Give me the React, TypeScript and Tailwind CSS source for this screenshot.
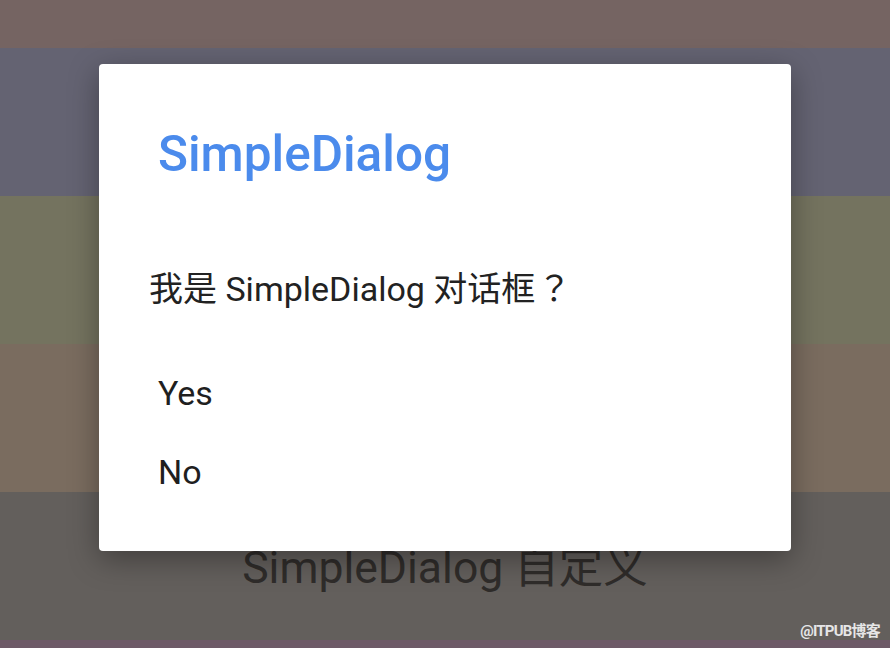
import React from "react";

const bands = [
  { bg: "bg-[#756462]", text: "AlertDialog 对话框" },
  { bg: "bg-[#646372]", text: "" },
  { bg: "bg-[#74735f]", text: "" },
  { bg: "bg-[#7a6c5f]", text: "" },
  { bg: "bg-[#635f5c]", text: "SimpleDialog 自定义" },
  { bg: "bg-[#6d5a67]", text: "" },
];

export default function App() {
  return (
    <div
      className="relative w-[890px] h-[648px] overflow-hidden"
      style={{ fontFamily: 'Roboto, "Noto Sans CJK SC", sans-serif' }}
    >
      <div className="flex flex-col -mt-[100px]">
        {bands.map((b, i) => (
          <div
            key={i}
            className={`${b.bg} h-[148px] flex items-center justify-center shrink-0`}
          >
            <span className="text-[44.5px] text-[#2f2c2a] leading-none pt-[4px]">{b.text}</span>
          </div>
        ))}
      </div>

      <div className="absolute left-[99px] top-[64px] w-[692px] h-[487px] bg-white rounded-[4px] shadow-[0_8px_30px_rgba(0,0,0,0.35)] pt-[61px]">
        <div className="pl-[59px] text-[49.5px] leading-[58px] font-medium text-[#4b8bec]">
          SimpleDialog
        </div>
        <div className="mt-[84px] pl-[50px] text-[34px] leading-[40px] text-[#222222]">
          我是 SimpleDialog 对话框
          <span className="font-[family-name:'Noto_Sans_CJK_TC',sans-serif] ml-[2px]">？</span>
        </div>
        <div className="mt-[44px] flex flex-col">
          <div className="h-[79px] flex items-center pl-[59px] text-[34px] leading-[40px] text-[#1f1f1f]">
            Yes
          </div>
          <div className="h-[79px] flex items-center pl-[59px] text-[34px] leading-[40px] text-[#1f1f1f]">
            No
          </div>
        </div>
      </div>

      <div className="absolute right-[10px] bottom-[6px] text-[15px] font-bold text-[#e6e6e6] tracking-[-0.8px]">
        @ITPUB博客
      </div>
    </div>
  );
}
